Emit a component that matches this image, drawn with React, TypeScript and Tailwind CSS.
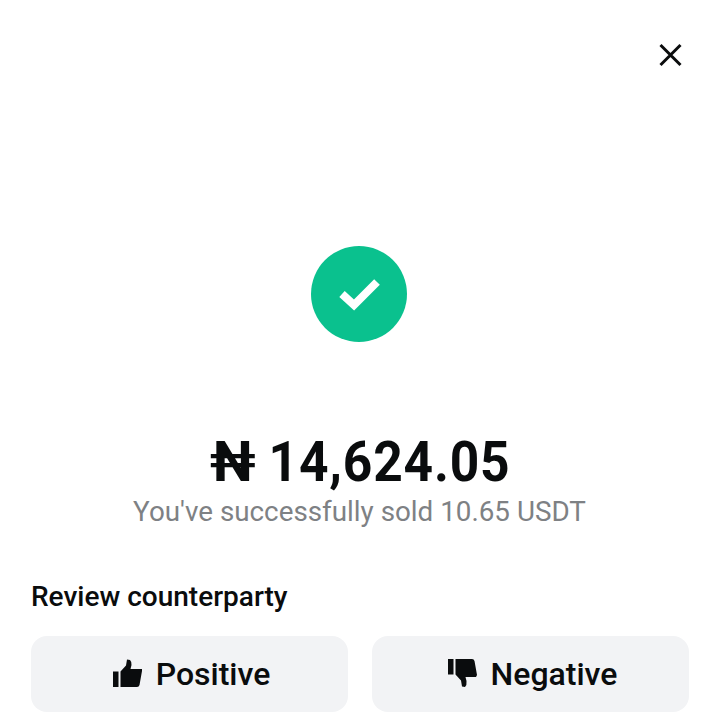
import React from "react";
import type { FC } from "react";

const ThumbUp: FC = () => (
    <svg width="30" height="30" viewBox="0 0 30 30" fill="#0a0c0d">
        <rect x="0" y="12.5" width="5.5" height="15.5" />
        <path d="M7.5 12.5 L13 6.5 L14 0.5 L17 1 Q19 3 18.5 6 L17.5 10 L29 10 L29 12 L26.5 26 Q26 28 24 28 L7.5 28 Z" />
    </svg>
);

const ThumbDown: FC = () => (
    <svg width="30" height="30" viewBox="0 0 30 30" fill="#0a0c0d">
        <rect x="0" y="0" width="5.5" height="15.5" />
        <path d="M7.5 15.5 L13 21.5 L14 27.5 L17 28 Q19 26 18.5 22 L17.5 18 L28 18 L29 16 L26.5 2 Q26 0 24 0 L7.5 0 Z" />
    </svg>
);

const ReviewButton: FC<{ icon: React.ReactNode; label: string }> = ({ icon, label }) => (
    <button className="flex flex-1 h-[76px] items-center justify-center gap-[13px] rounded-2xl bg-[#f2f3f5] pl-1 text-[32px] font-medium text-[#0a0c0d]">
        {icon}
        <span>{label}</span>
    </button>
);

export default function App() {
    return (
        <div className="flex h-[720px] w-[719px] flex-col overflow-hidden bg-white font-['Roboto',sans-serif]">
            <div className="flex justify-end pt-[42px] pr-[35px]">
                <svg width="27" height="27" viewBox="0 0 27 27" stroke="#0a0c0d" strokeWidth="3" fill="none">
                    <path d="M3.5 3 L23.5 23 M23.5 3 L3.5 23" />
                </svg>
            </div>

            <div className="mt-[177px] flex justify-center pr-px">
                <div className="flex h-24 w-24 items-center justify-center rounded-full bg-[#0ac18e]">
                    <svg width="44" height="36" viewBox="0 0 44 36" fill="none" stroke="#ffffff" strokeWidth="8">
                        <path d="M5 18 L17 29 L40 6" />
                    </svg>
                </div>
            </div>

            <div className="mt-[88px] scale-x-[0.92] pl-1 text-center text-[56px] leading-[64px] font-bold tracking-[0.9px] text-[#0a0c0d]">
                <span className="inline-block scale-x-[1.1]">₦</span> 14,624.05
            </div>
            <div className="text-center text-[27.8px] leading-[36px] text-[#7e8184]">
                You've successfully sold 10.65 USDT
            </div>

            <div className="mt-[49px] px-[31px] text-[28px] leading-[36px] font-medium text-[#0a0c0d]">
                Review counterparty
            </div>

            <div className="mt-[21px] flex gap-6 pr-[30px] pl-[31px]">
                <ReviewButton icon={<ThumbUp />} label="Positive" />
                <ReviewButton icon={<ThumbDown />} label="Negative" />
            </div>
        </div>
    );
}
